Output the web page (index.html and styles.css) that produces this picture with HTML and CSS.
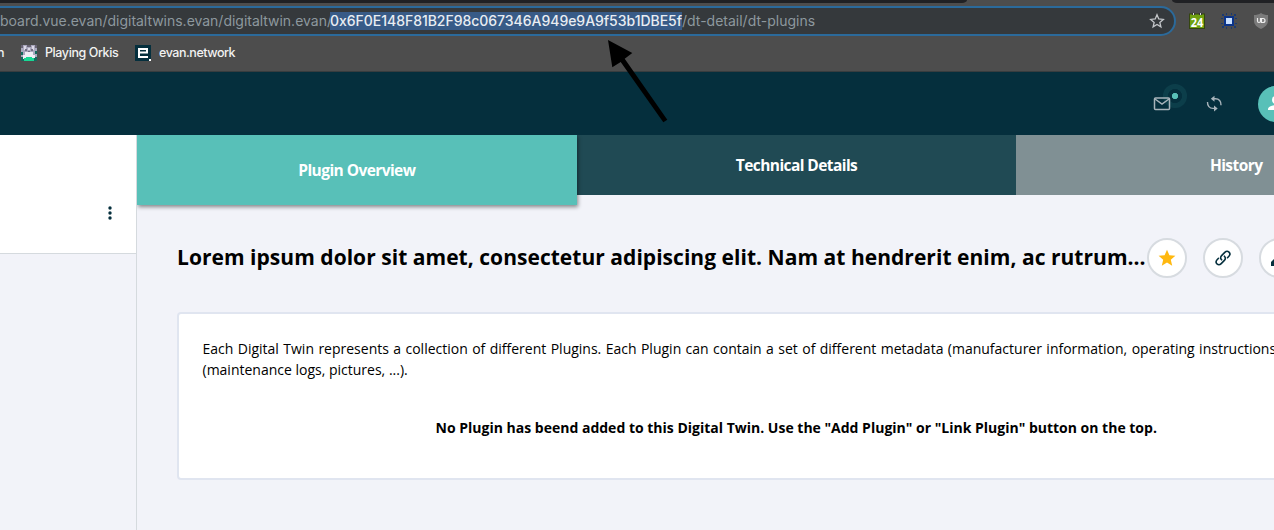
FILE: index.html
```html
<!DOCTYPE html>
<html lang="en">
<head>
<meta charset="utf-8">
<title>Digital Twin - Plugin Overview</title>
<link rel="stylesheet" href="styles.css">
</head>
<body>
<div class="browser">
  <div class="tabstrip"><span class="strip-left"></span><span class="strip-right"></span></div>
  <div class="toolbar">
    <div class="omnibox">
      <span class="url url-host">board.vue.evan/digitaltwins.evan/digitaltwin.evan/</span><span class="url url-selected">0x6F0E148F81B2F98c067346A949e9A9f53b1DBE5f</span><span class="url url-path">/dt-detail/dt-plugins</span>
      <svg class="bookmark-star" width="16" height="16" viewBox="0 0 16 16"><path d="M8 1.800l1.750 4.200 4.550.400-3.450 3 1.050 4.400L8 11.500l-3.900 2.300 1.050-4.400-3.450-3 4.550-.400z" fill="none" stroke="#c3c6c9" stroke-width="1.300"/></svg>
    </div>
    <div class="extensions">
      <svg width="16" height="16" viewBox="0 0 16 16"><rect x=".5" y="1" width="15" height="14.500" fill="#6fa010" stroke="#34450f"/><path d="M3 0h3v2H3zM10 0h3v2h-3z" fill="#333"/><path d="M4 1h1M11 1h1" stroke="#ddd" stroke-width="2"/><text x="8" y="13.500" textLength="12.500" lengthAdjust="spacingAndGlyphs" class="calendar-day">24</text></svg>
      <svg width="16" height="16" viewBox="0 0 16 16" shape-rendering="crispEdges"><path d="M1 1h2v2H1zM5 0h1v2H5zM10 0h1v2h-1zM13 1h2v2h-2zM0 5h2v1H0zM0 10h2v1H0zM14 5h2v1h-2zM14 10h2v1h-2zM1 13h2v2H1zM5 14h1v2H5zM10 14h1v2h-1zM13 13h2v2h-2z" fill="#1c3a70"/><path d="M3 3h10v10H3z" fill="#0b348a"/><path d="M5 5h6v6H5z" fill="#c9e0ff"/></svg>
      <svg width="16" height="16" viewBox="0 0 16 16"><path d="M8 0c2 1.500 4.500 2 7 2v6c0 3.500-3 6.200-7 8-4-1.800-7-4.500-7-8V2c2.500 0 5-.5 7-2z" fill="#7b7b7b"/><path d="M4.500 5v3q0 1.500 1.500 1.500T7.500 8V5M8.500 9.500v-4h1.500q2 0 2 2t-2 2z" fill="none" stroke="#eee" stroke-width="1.200"/></svg>
    </div>
  </div>
  <div class="bookmarks">
    <span class="bm-cut">n</span>
    <svg class="bm-game" width="16" height="16" viewBox="0 0 16 16" shape-rendering="crispEdges"><path d="M0 0h16v16H0z" fill="#aaa8bd"/><path d="M0 0h2v3H0zM6 0h4v2H6zM14 0h2v3h-2z" fill="#686373"/><path d="M3 1h2v4H3zM11 1h2v4h-2zM7 3h2v2H7z" fill="#ddd9e7"/><path d="M4 4h2v2H4zM10 4h2v2h-2zM7 6h2v1H7z" fill="#736e82"/><path d="M0 7h2v3H0zM14 6h2v3h-2zM0 12h3v4H0zM13 12h3v4h-3z" fill="#15685d"/><path d="M4 7h8v3h2v3h-3v-1H5v2H2v-4h2z" fill="#f0edf5"/><path d="M5 12h6v1h2v3H3v-3h2z" fill="#19d894"/></svg>
    <span class="bm-playing">Playing Orkis</span>
    <svg class="bm-evan" width="16" height="16" viewBox="0 0 16 16"><path d="M0 0h16v16H0z" fill="#052f3d"/><path d="M13 7.500H4M12 7.800V4H4v8h9" fill="none" stroke="#fff" stroke-width="2"/><path d="M14 14h2v2h-2z" fill="#fff"/></svg>
    <span class="bm-network">evan.network</span>
  </div>
</div>
<header class="app-header">
  <span class="mail">
    <svg class="envelope" width="18" height="14" viewBox="0 0 18 14"><rect x="1.500" y="1" width="15" height="11.500" rx="1" fill="none" stroke="#a8b4bb" stroke-width="1.500"/><path d="M2 2l7 5 7-5" fill="none" stroke="#a8b4bb" stroke-width="1.500"/></svg>
    <span class="notice"></span>
  </span>
  <svg class="sync" width="17" height="17" viewBox="0 0 17 17" fill="none" stroke="#a8b4bb" stroke-width="1.400"><path d="M8 3.800h1.500c3.500 0 5.700 2.500 5.500 6.400M8.500 13.400H7C3.500 13.400 1.300 10.800 1.500 7"/><path d="M8.500.800v6L4.800 3.800zM8 10.400v6l3.700-3z" fill="#a8b4bb" stroke="none"/></svg>
  <span class="avatar"><svg width="24" height="24" viewBox="0 0 24 24" fill="#fff"><circle cx="12" cy="8" r="4"/><path d="M4 18v-1c0-2.500 5-4 8-4s8 1.500 8 4v1z"/></svg></span>
</header>
<div class="app-body">
  <aside class="sidebar">
    <div class="sidebar-top"><svg width="4" height="14" viewBox="0 0 4 14" fill="#052f3d"><circle cx="2" cy="2" r="1.700"/><circle cx="2" cy="7" r="1.700"/><circle cx="2" cy="12" r="1.700"/></svg></div>
  </aside>
  <main class="content">
    <nav class="tabs">
      <a class="tab tab-active"><span>Plugin Overview</span></a>
      <a class="tab tab-technical"><span>Technical Details</span></a>
      <a class="tab tab-history"><span>History</span></a>
    </nav>
    <div class="heading">
      <h1>Lorem ipsum dolor sit amet, consectetur adipiscing elit. Nam at hendrerit enim, ac rutrum...</h1>
      <div class="actions">
        <button class="round"><svg width="18" height="18" viewBox="0 0 18 18"><path d="M9 .8l2.400 5.500 6 .5-4.600 4 1.400 5.900L9 13.500l-5.200 3.200 1.400-5.900-4.600-4 6-.5z" fill="#ffb80f"/></svg></button>
        <button class="round"><svg width="18" height="18" viewBox="0 0 18 18" fill="none" stroke="#052f3d" stroke-width="1.600" stroke-linecap="round"><path d="M7.600 10.800c-1.300-1.300-1.200-3 0-4.200l3.200-3.200c1.300-1.300 3-1.400 4.200-.3 1.200 1.200 1.100 2.900-.1 4.200l-1.400 1.400"/><path d="M10.400 7.200c1.300 1.300 1.200 3 0 4.200l-3.200 3.200c-1.300 1.300-3 1.400-4.200.3-1.200-1.200-1.100-2.900.1-4.200L4.500 9.300"/></svg></button>
        <button class="round"><svg width="18" height="18" viewBox="0 0 18 18" fill="#052f3d"><path d="M1 17v-4L12 2l4 4L5 17z"/></svg></button>
      </div>
    </div>
    <section class="card">
      <p class="description"><span class="line-one">Each Digital Twin represents a collection of different Plugins. Each Plugin can contain a set of different metadata (manufacturer information, operating instructions</span><br><span class="line-two">(maintenance logs, pictures, ...).</span></p>
      <p class="empty"><span>No Plugin has beend added to this Digital Twin. Use the "Add Plugin" or "Link Plugin" button on the top.</span></p>
    </section>
  </main>
</div>
<svg class="pointer-arrow" width="64" height="86" viewBox="0 0 64 86"><path d="M0 0l24.300 13-7.600 5.700 42.600 61-4 2.600L12.700 22l-8.400 5.300z"/></svg>
</body>
</html>
```
FILE: styles.css
```css
* { box-sizing: border-box; }
body { margin: 0; width: 1274px; height: 530px; overflow: hidden; position: relative; background: #f2f3f9; font-family: "Open Sans", sans-serif; color: #000; }
svg { display: block; flex: none; }
.browser { height: 72px; background: #4d4d4d; border-bottom: 1px solid #383d3f; font-family: Inter, sans-serif; overflow: hidden; }
.tabstrip { height: 3px; display: flex; justify-content: space-between; }
.strip-left { width: 967px; background: #202124; border-bottom-right-radius: 5px 3px; }
.strip-right { width: 102px; background: #202124; border-bottom-left-radius: 5px 3px; }
.toolbar { height: 33px; display: flex; padding-top: 3px; }
.omnibox { width: 1176px; height: 30px; flex: none; display: flex; align-items: center; background: #35393c; border: 2px solid #2b6a9b; border-left: 0; border-radius: 0 15px 15px 0; }
.url { font-size: 14px; line-height: 18px; white-space: pre; flex: none; color: #8d989e; }
.url-host { width: 330px; letter-spacing: -.02px; }
.url-selected { width: 352px; letter-spacing: -.03px; font-weight: 500; background: #385b87; color: #e9edf2; }
.bookmark-star { margin-left: auto; margin-right: 9px; }
.extensions { display: flex; gap: 16px; padding: 7px 0 0 13px; }
.calendar-day { font: bold 13px "Open Sans", sans-serif; fill: #fff; text-anchor: middle; }
.bookmarks { height: 35px; display: flex; align-items: center; color: #f2f2f2; font-size: 12.500px; font-weight: 500; letter-spacing: -.4px; line-height: 16px; padding-bottom: 1px; white-space: nowrap; }
.bm-cut { width: 21px; text-indent: -3px; flex: none; }
.bm-playing { margin-left: 8px; width: 90px; }
.bm-network { margin-left: 8px; letter-spacing: -.46px; }
.app-header { height: 63px; background: #052f3d; display: flex; align-items: center; padding-left: 1153px; overflow: hidden; }
.mail { position: relative; width: 53px; flex: none; }
.envelope { position: relative; z-index: 1; }
.notice { position: absolute; left: 10px; top: -13px; width: 24px; height: 24px; border-radius: 50%; background: radial-gradient(circle, #58c0b8 0 2.800px, #052f3d 3.500px 6.800px, #0c3e4a 7.300px); }
.avatar { width: 36px; height: 36px; margin-left: 35px; border-radius: 50%; background: #58c0b8; display: flex; align-items: center; justify-content: center; flex: none; }
.app-body { height: 395px; display: flex; }
.sidebar { width: 137px; flex: none; border-right: 1px solid #d5dade; }
.sidebar-top { height: 119px; background: #fff; border-bottom: 1px solid #d5dade; display: flex; justify-content: flex-end; padding: 71px 24px 0 0; }
.content { width: 1319px; flex: none; }
.tabs { display: flex; align-items: flex-start; height: 60px; }
.tab { flex: 1; height: 60px; display: flex; align-items: center; justify-content: center; color: #fff; font-size: 15.500px; letter-spacing: -.57px; font-weight: 700; }
.tab-active { height: 70px; background: #58c0b8; box-shadow: 1px 2px 4px rgba(0,0,0,.45); z-index: 1; clip-path: inset(0 -10px -10px 0); }
.tab-technical { background: #204a54; }
.tab-history { background: #809094; }
.heading { display: flex; align-items: center; height: 40px; margin: 43px 40px 0; }
h1 { margin: 0; width: 970px; flex: none; font-size: 21px; letter-spacing: .035px; line-height: 30px; font-weight: 700; white-space: nowrap; padding-bottom: 2px; }
.actions { display: flex; gap: 16px; }
.round { width: 40px; height: 40px; flex: none; border: 2px solid #d7dbe0; border-radius: 50%; background: #fff; padding: 0; display: flex; align-items: center; justify-content: center; }
.card { height: 168px; margin: 34px 40px 0; background: #fff; border: 2px solid #e0e5f0; border-radius: 4px; padding: 24px 24px 24px 23.500px; font-size: 14px; line-height: 21px; white-space: nowrap; }
.card p { margin: 0; }
.line-one { word-spacing: .77px; }
.card .empty { margin-top: 37px; text-align: center; font-weight: 700; }
.pointer-arrow { position: absolute; left: 608px; top: 40px; }
```
